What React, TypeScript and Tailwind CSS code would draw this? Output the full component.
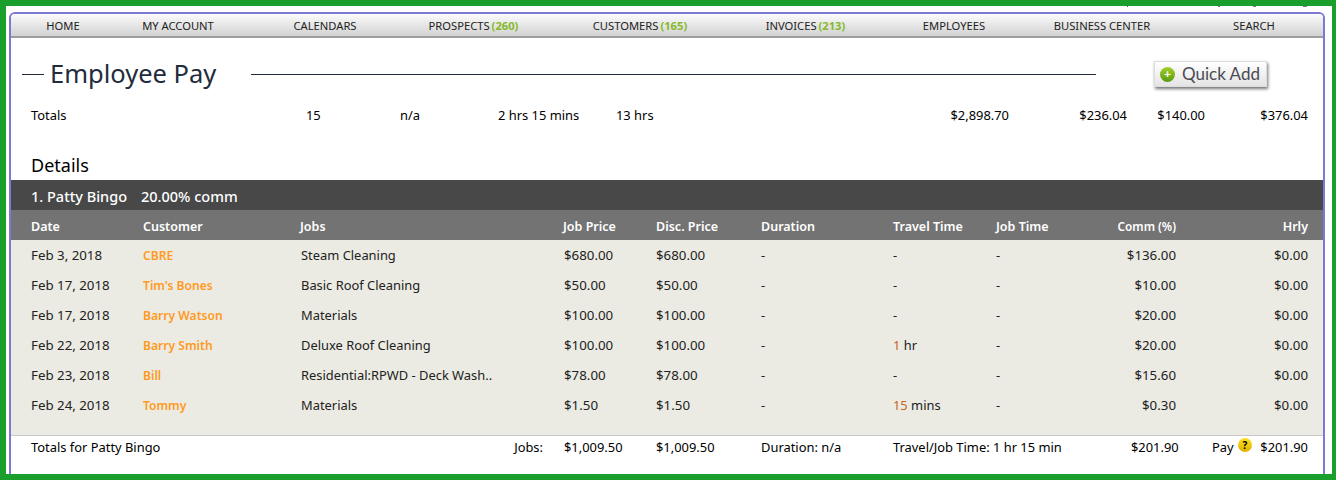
const font = "font-['Noto_Sans','Open_Sans',sans-serif]";

const navItems = [
  { label: 'HOME', width: 'w-[104px]' },
  { label: 'MY ACCOUNT', width: 'w-[126px]' },
  { label: 'CALENDARS', width: 'w-[168px]' },
  { label: 'PROSPECTS', count: '(260)', width: 'w-[129px]' },
  { label: 'CUSTOMERS', count: '(165)', width: 'w-[204px]' },
  { label: 'INVOICES', count: '(213)', width: 'w-[127px]' },
  { label: 'EMPLOYEES', width: 'w-[170px]' },
  { label: 'BUSINESS CENTER', width: 'w-[126px]' },
  { label: 'SEARCH', width: 'w-[178px]' },
];

const rows = [
  { date: 'Feb 3, 2018', customer: 'CBRE', job: 'Steam Cleaning', price: '$680.00', disc: '$680.00', travel: '-', comm: '$136.00' },
  { date: 'Feb 17, 2018', customer: "Tim's Bones", job: 'Basic Roof Cleaning', price: '$50.00', disc: '$50.00', travel: '-', comm: '$10.00' },
  { date: 'Feb 17, 2018', customer: 'Barry Watson', job: 'Materials', price: '$100.00', disc: '$100.00', travel: '-', comm: '$20.00' },
  { date: 'Feb 22, 2018', customer: 'Barry Smith', job: 'Deluxe Roof Cleaning', price: '$100.00', disc: '$100.00', num: '1', travel: ' hr', comm: '$20.00' },
  { date: 'Feb 23, 2018', customer: 'Bill', job: 'Residential:RPWD - Deck Wash..', price: '$78.00', disc: '$78.00', travel: '-', comm: '$15.60' },
  { date: 'Feb 24, 2018', customer: 'Tommy', job: 'Materials', price: '$1.50', disc: '$1.50', num: '15', travel: ' mins', comm: '$0.30' },
];

const grid = 'grid grid-cols-[112px_158px_262px_93px_105px_132px_103px_103px_77px_132px] pl-5 items-center';

export default function App() {
  return (
    <div className={`relative h-[480px] w-[1336px] overflow-hidden border-[#1a9e2c] border-t-[6px] border-l-[6px] border-r-4 border-b-[6px] bg-white pl-[3px] pr-[7px] pt-1.5 text-[12.9px] text-black ${font}`}>
      {/* bits of a line above the panel that the page has scrolled away */}
      <div className="absolute left-[1121px] top-0 h-px w-px bg-[#555]" />
      <div className="absolute left-[1212px] top-0 h-px w-0.5 bg-[#777]" />
      <div className="absolute left-[1247px] top-0 h-px w-[3px] bg-[#777]" />
      <div className="absolute left-[1297px] top-0 h-px w-1 bg-[#777]" />

      <div className="h-[470px] overflow-hidden rounded-t-md border-x-2 border-t-2 border-[#7b78d6]">
        <nav className="flex h-[24px] items-center border-b-2 border-[#9c9c9c] bg-gradient-to-b from-[#fbfbfb] to-[#d2d2d2] pt-0.5 text-[11.2px] text-[#222]">
          {navItems.map((item) => (
            <div key={item.label} className={`${item.width} shrink-0 text-center`}>
              {item.label}
              {item.count && <span className="ml-0.5 font-bold text-[#86b92a]">{item.count}</span>}
            </div>
          ))}
        </nav>

        <div className="flex h-[68px] items-center pl-[11px] pt-1">
          <div className="h-px w-[22px] bg-[#222c3c]" />
          <h1 className="ml-[6px] w-[201px] text-[25.5px] leading-none text-[#222c3c]">Employee Pay</h1>
          <div className="h-px w-[845px] bg-[#222c3c]" />
          <button className="ml-[58px] flex h-[26px] w-[113px] items-center gap-[7px] border border-[#ddd] bg-gradient-to-b from-white to-[#e4e4e4] pl-[5px] font-['Lato',sans-serif] text-[17px] text-[#4a4a55] shadow-[1px_2px_3px_rgba(0,0,0,0.55)]">
            <span className="flex h-[15px] w-[15px] items-center justify-center rounded-full bg-gradient-to-b from-[#a4cf2a] to-[#5a9a10] text-[12px] font-bold leading-none text-white">+</span>
            Quick Add
          </button>
        </div>

        <div className="flex h-[20px] items-center pl-5">
          <span className="w-[275px]">Totals</span>
          <span className="w-[94px]">15</span>
          <span className="w-[98px]">n/a</span>
          <span className="w-[118px]">2 hrs 15 mins</span>
          <span className="w-[150px]">13 hrs</span>
          <span className="w-[243px] text-right">$2,898.70</span>
          <span className="w-[118px] text-right">$236.04</span>
          <span className="w-[78px] text-right">$140.00</span>
          <span className="w-[103px] text-right">$376.04</span>
        </div>

        <h2 className="mt-[27px] pl-5 text-[18px] leading-[24px]">Details</h2>

        <div className="mt-[3px] flex h-[30px] items-center bg-[#484848] pl-5 pt-1 text-[14.5px] font-medium text-white">
          <span className="w-[110px]">1. Patty Bingo</span>
          <span>20.00% comm</span>
        </div>

        <div className={`${grid} h-[30px] bg-[#737373] pt-1 text-[12.5px] font-semibold text-white`}>
          <span>Date</span>
          <span>Customer</span>
          <span className="-ml-px">Jobs</span>
          <span>Job Price</span>
          <span>Disc. Price</span>
          <span>Duration</span>
          <span>Travel Time</span>
          <span>Job Time</span>
          <span className="text-right text-[11.8px]">Comm (%)</span>
          <span className="text-right">Hrly</span>
        </div>

        <div className="h-[196px] border-b border-[#c8c8c8] bg-[#ebebe3] pt-px text-[#222]">
          {rows.map((row, i) => (
            <div key={i} className={`${grid} h-[30px]`}>
              <span className="text-[13.3px]">{row.date}</span>
              <span className="text-[12.1px] font-semibold text-[#ff9a1f]">{row.customer}</span>
              <span className="truncate">{row.job}</span>
              <span className="ml-px text-[13.3px]">{row.price}</span>
              <span className="text-[13.3px]">{row.disc}</span>
              <span>-</span>
              <span>
                {row.num && <span className="text-[#c8651b]">{row.num}</span>}
                {row.travel}
              </span>
              <span>-</span>
              <span className="text-right text-[13.3px]">{row.comm}</span>
              <span className="text-right text-[13.3px]">$0.00</span>
            </div>
          ))}
        </div>

        <div className="flex h-[24px] items-center pl-5 pr-[15px]">
          <span className="w-[481px]">Totals for Patty Bingo</span>
          <span className="w-[31px] text-right">Jobs:</span>
          <span className="ml-[21px] w-[92px]">$1,009.50</span>
          <span className="w-[105px]">$1,009.50</span>
          <span className="w-[132px]">Duration: n/a</span>
          <span className="w-[238px]">Travel/Job Time: 1 hr 15 min</span>
          <span className="w-[47px] text-right">$201.90</span>
          <span className="ml-[34px] w-[26px]">Pay</span>
          <span className="mb-1.5 flex h-[14px] w-[14px] items-center justify-center rounded-full bg-gradient-to-b from-[#ffdf20] to-[#e0b000] text-[10px] font-bold leading-none text-black">?</span>
          <span className="flex-1 text-right">$201.90</span>
        </div>
      </div>
    </div>
  );
}
